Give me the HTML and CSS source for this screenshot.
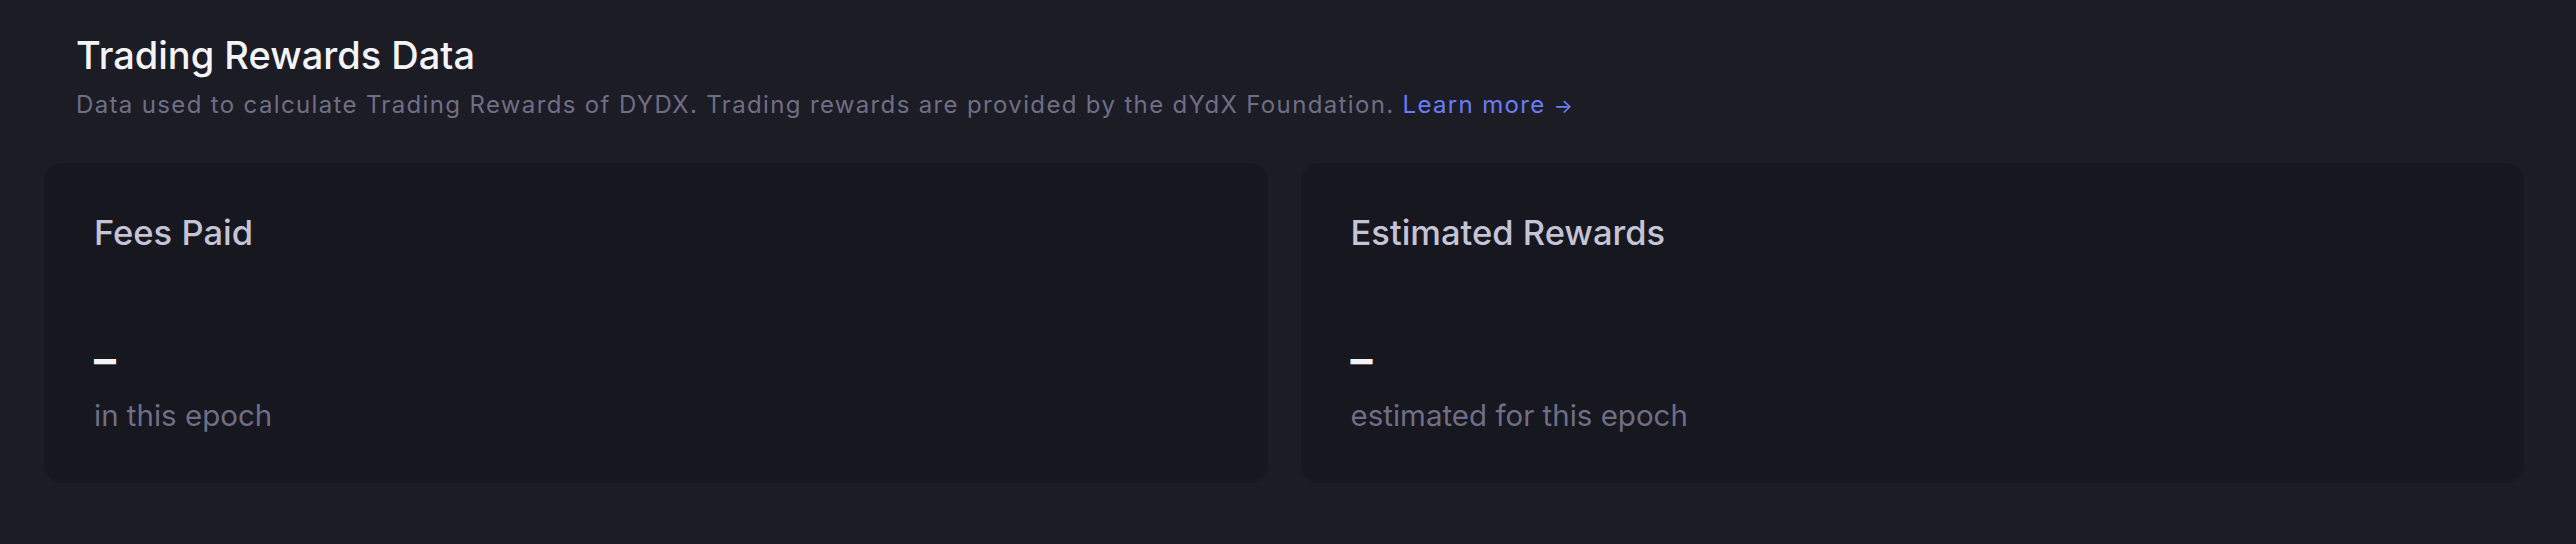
FILE: index.html
```html
<!DOCTYPE html>
<html lang="en">
<head>
<meta charset="utf-8">
<title>Trading Rewards Data</title>
<link rel="stylesheet" href="styles.css">
</head>
<body>
<section class="rewards">
  <header class="rewards-header">
    <h2 class="rewards-title">Trading Rewards Data</h2>
    <p class="rewards-desc">Data used to calculate Trading Rewards of DYDX. Trading rewards are provided by the dYdX Foundation. <a class="learn-more" href="#">Learn more <span class="arrow">→</span></a></p>
  </header>
  <div class="cards">
    <div class="card">
      <div class="card-label">Fees Paid</div>
      <div class="card-value">–</div>
      <div class="card-sub">in this epoch</div>
    </div>
    <div class="card">
      <div class="card-label">Estimated Rewards</div>
      <div class="card-value">–</div>
      <div class="card-sub">estimated for this epoch</div>
    </div>
  </div>
</section>
</body>
</html>
```
FILE: styles.css
```css
* { box-sizing: border-box; }
html, body { margin: 0; padding: 0; }
body {
  background: #1c1c25;
  font-family: Inter, "Noto Sans", sans-serif;
  width: 2576px;
  height: 544px;
  overflow: hidden;
}
.rewards {
  padding: 33px 52px 0 44px;
}
.rewards-header {
  padding-left: 32px;
}
.rewards-title {
  margin: 0;
  font-size: 38px;
  line-height: 44px;
  font-weight: 500;
  color: #f4f4f6;
}
.rewards-desc {
  margin: 13px 0 0;
  font-size: 24px;
  line-height: 30px;
  letter-spacing: 1.35px;
  color: #6f6e85;
}
.learn-more {
  color: #6a7cf8;
  text-decoration: none;
}
.arrow { font-size: 20px; }
.cards {
  margin-top: 42px;
  display: grid;
  grid-template-columns: 1fr 1fr;
  gap: 33px;
}
.card {
  background: #17171f;
  border-radius: 18px;
  height: 320px;
  padding: 50px 50px 0;
  display: flex;
  flex-direction: column;
}
.card-label {
  font-size: 34.5px;
  line-height: 40px;
  font-weight: 500;
  color: #c5c4d6;
}
.card-value {
  margin-top: 86px;
  font-size: 44px;
  line-height: 40px;
  font-weight: 700;
  color: #f4f4f6;
}
.card-sub {
  margin-top: 19px;
  font-size: 29.5px;
  line-height: 34px;
  color: #6f6e85;
}
```
